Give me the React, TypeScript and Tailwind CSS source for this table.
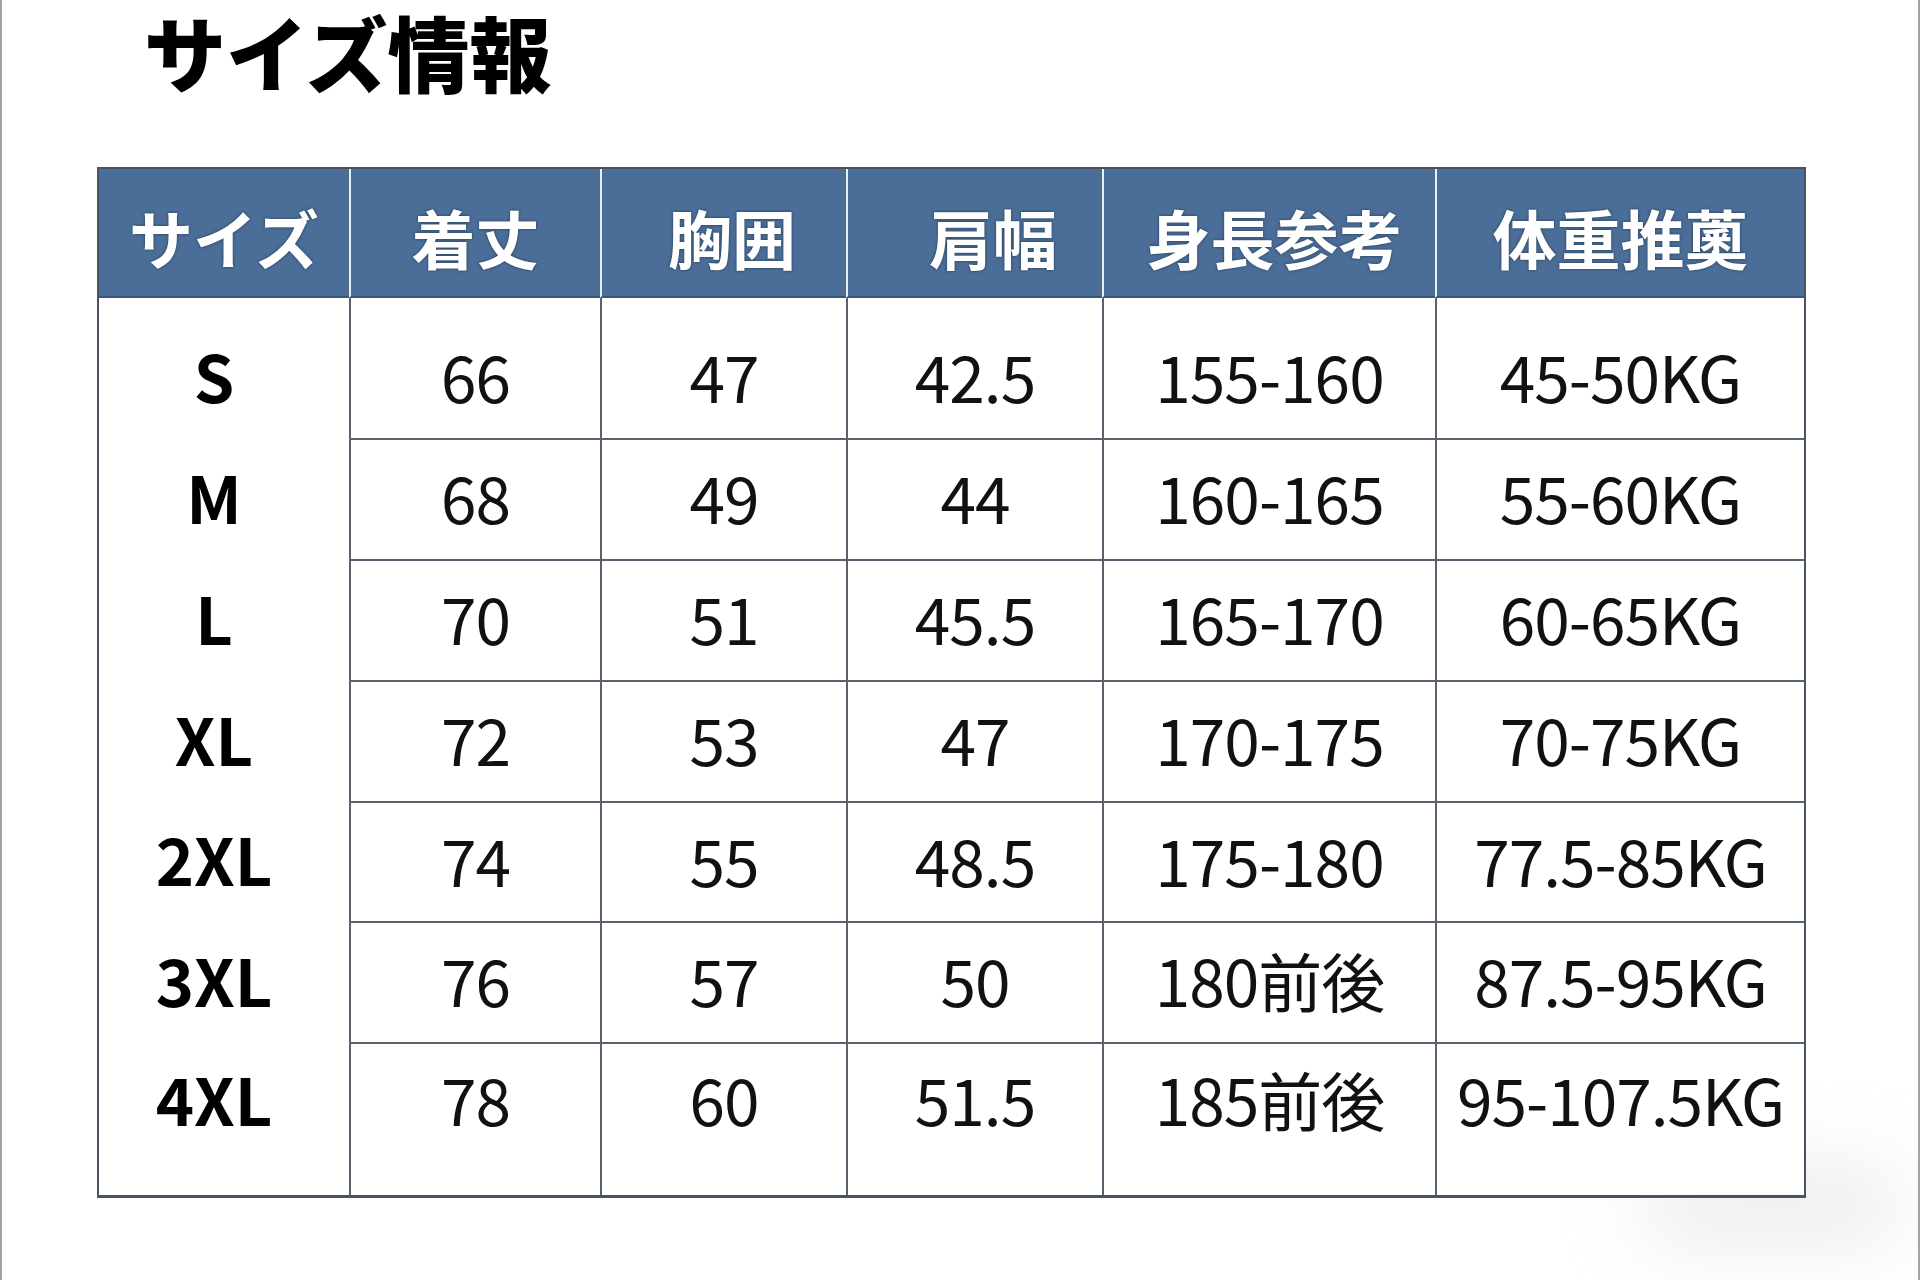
import React from "react";

const headers = ["サイズ", "着丈", "胸囲", "肩幅", "身長参考", "体重推薁"];
const rows: string[][] = [
  ["S", "66", "47", "42.5", "155-160", "45-50KG"],
  ["M", "68", "49", "44", "160-165", "55-60KG"],
  ["L", "70", "51", "45.5", "165-170", "60-65KG"],
  ["XL", "72", "53", "47", "170-175", "70-75KG"],
  ["2XL", "74", "55", "48.5", "175-180", "77.5-85KG"],
  ["3XL", "76", "57", "50", "180前後", "87.5-95KG"],
  ["4XL", "78", "60", "51.5", "185前後", "95-107.5KG"],
];

const headerPad = ["", "", "pl-[16px]", "pl-[36px]", "pl-[10px]", ""];

export default function App() {
  return (
    <div
      className="relative w-[1920px] h-[1280px] bg-white border-l-2 border-r-2 border-[#a3a3a3] overflow-hidden"
      style={{ fontFamily: '"Noto Sans CJK JP", "Noto Sans", sans-serif' }}
    >
      <div className="pl-[142px] pt-[2px] h-[167px]">
        <h1 className="text-[82px] leading-[1.2] font-black text-black">サイズ情報</h1>
      </div>

      <div className="absolute left-[1640px] top-[1170px] w-[260px] h-[70px] rounded-full bg-[#d4d4d4] opacity-50 blur-2xl" />

      <div className="relative ml-[95px] w-[1709px] grid grid-cols-[250px_251px_246px_256px_333px_369px] grid-rows-[129px_140px_121px_121px_121px_120px_121px_153px] border-2 border-b-[3px] border-[#4a5362] bg-white">
        {headers.map((h, i) => (
          <div
            key={h}
            className={`flex items-center justify-center bg-[#4a6e98] border-b-2 border-[#3d5675] pt-[8px] ${headerPad[i]} ${
              i > 0 ? "border-l-2 border-l-[#e8eef5]" : ""
            }`}
          >
            <span className="text-[64px] leading-[1.2] font-bold text-white [text-shadow:0_0_3px_rgba(20,30,45,0.7)]">
              {h}
            </span>
          </div>
        ))}
        {rows.map((r, ri) =>
          r.map((c, ci) => (
            <div
              key={`${ri}-${ci}`}
              className={`flex justify-center items-center ${
                ri === 0 ? "pt-[14px]" : ri === rows.length - 1 ? "pb-[42px]" : "pb-[6px]"
              } ${ci === 0 ? "pr-[20px]" : ""} ${ci > 0 ? "border-l-2 border-[#5a6270]" : ""} ${
                ci > 0 && ri > 0 ? "border-t-2" : ""
              }`}
            >
              <span
                className={
                  ci === 0
                    ? "text-[65px] leading-[1.2] font-bold text-black"
                    : "text-[64px] leading-[1.2] font-normal text-[#111] tracking-[-1px]"
                }
              >
                {c}
              </span>
            </div>
          ))
        )}
      </div>
    </div>
  );
}
